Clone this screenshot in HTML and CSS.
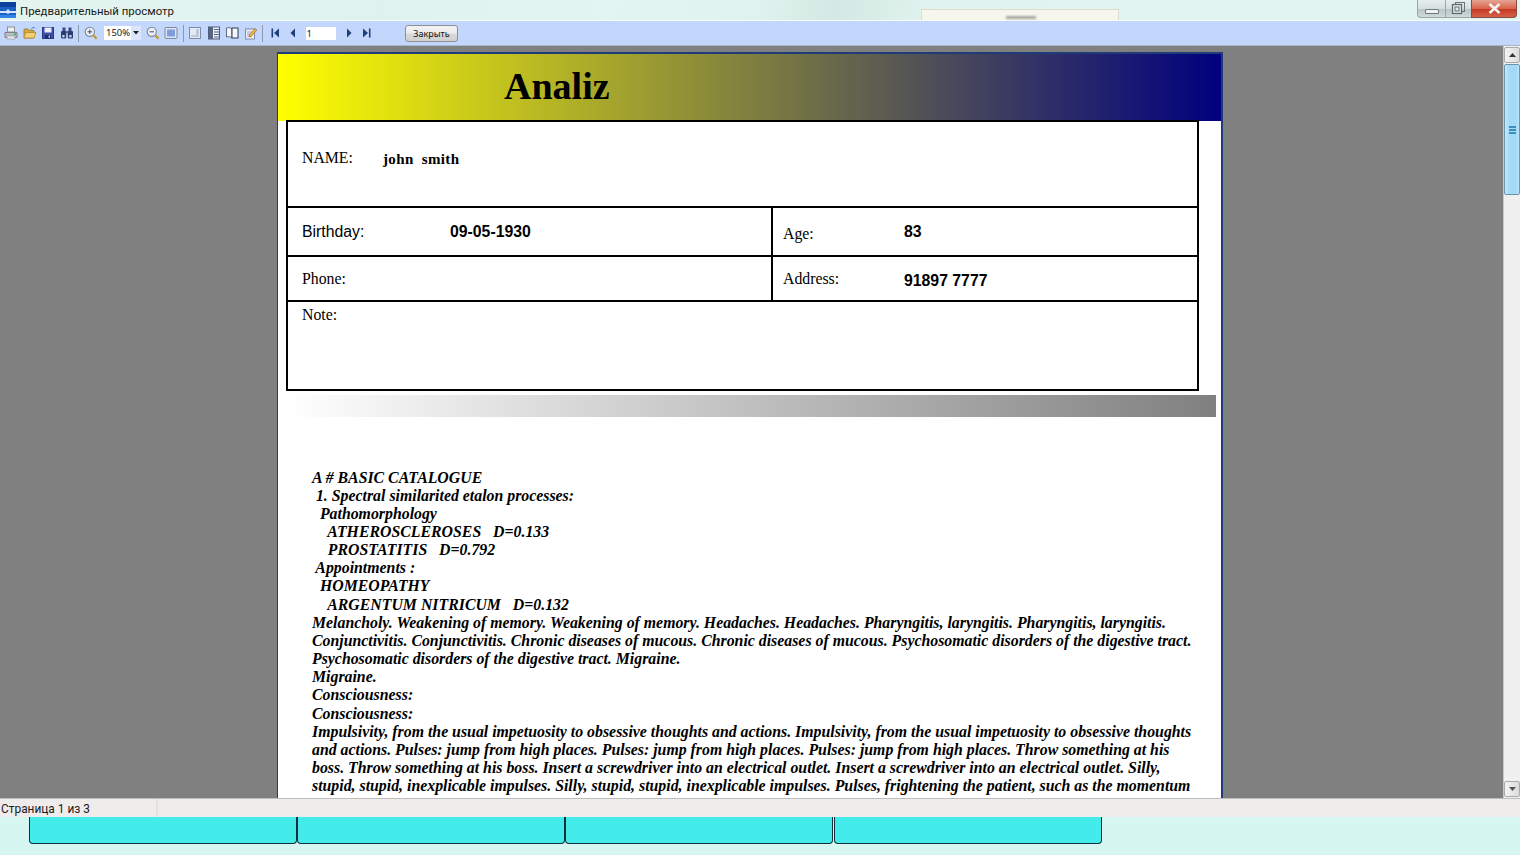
FILE: index.html
```html
<!DOCTYPE html>
<html lang="ru">
<head>
<meta charset="utf-8">
<title>Предварительный просмотр</title>
<link rel="stylesheet" href="styles.css">
</head>
<body>
<div class="app">
  <header class="titlebar">
    <svg class="app-icon" viewBox="0 0 16 16"><rect width="16" height="16" fill="#1b5fc4"/><rect y="0" width="16" height="5" fill="#0d3f9c"/><path d="M0 9h6l2-2 2 2h6v2h-6l-2 1-2-1H0z" fill="#cfe6ff"/><rect y="13" width="16" height="3" fill="#2f86e6"/></svg>
    <span class="window-title">Предварительный просмотр</span>
    <div class="ghost-window"><span class="ghost-text"></span></div>
    <div class="window-buttons">
      <button class="wbtn wbtn-min"><span class="min-glyph"></span></button>
      <button class="wbtn wbtn-max"><svg width="15" height="13" viewBox="0 0 15 13"><rect x="4.5" y="0.5" width="9" height="9" fill="none" stroke="#6b7478"/><rect x="1.5" y="2.5" width="9" height="9" fill="#dfe6e6" stroke="#5d666a" stroke-width="1.2"/><rect x="4" y="5" width="4" height="4" fill="none" stroke="#6b7478"/></svg></button>
      <button class="wbtn wbtn-close"><svg width="13" height="11" viewBox="0 0 13 11"><path d="M1.5 1l10 9M11.5 1l-10 9" stroke="#f4f4f4" stroke-width="2.6" fill="none"/></svg></button>
    </div>
  </header>

  <nav class="toolbar">
    <svg class="tool" viewBox="0 0 14 14"><rect x="3.5" y="1" width="7" height="5" fill="#eef0f2" stroke="#8b9097"/><path d="M1 6.5h12v5H1z" fill="#b8bec6" stroke="#7c828a"/><rect x="3" y="10" width="8" height="3" fill="#e8eaec" stroke="#8b9097" stroke-width=".6"/><rect x="10" y="7.5" width="2" height="1.5" fill="#35b24a"/></svg>
    <svg class="tool" viewBox="0 0 14 14"><path d="M1 3h4l1 1.5h5V12H1z" fill="#d8a93f" stroke="#a07a24" stroke-width=".8"/><path d="M2.5 6.5H13L11 12H1z" fill="#f2cf73" stroke="#b48a2c" stroke-width=".8"/><path d="M8 3.5c1-2 3-2.5 4-1.5" stroke="#5a7fb5" fill="none"/></svg>
    <svg class="tool" viewBox="0 0 14 14"><rect x="1.5" y="1.5" width="11" height="11" fill="#3c4fa8" stroke="#2b3a86"/><rect x="3.5" y="1.5" width="7" height="5" fill="#e8ecf5"/><rect x="4" y="9" width="6" height="3.5" fill="#1f2a66"/><rect x="7.6" y="9.6" width="1.4" height="2.2" fill="#cfd6ee"/></svg>
    <svg class="tool" viewBox="0 0 14 14"><rect x="2.5" y="1.5" width="3" height="4" fill="#3a4a7e"/><rect x="8.5" y="1.5" width="3" height="4" fill="#3a4a7e"/><rect x="1" y="5" width="5.2" height="7.5" rx="1" fill="#2d3c70"/><rect x="7.8" y="5" width="5.2" height="7.5" rx="1" fill="#2d3c70"/><rect x="6" y="5" width="2" height="2.5" fill="#5a6a9c"/><rect x="2.2" y="9" width="2.4" height="2.4" fill="#c3cde6"/><rect x="9.2" y="9" width="2.4" height="2.4" fill="#c3cde6"/></svg>
    <span class="sep"></span>
    <svg class="tool" viewBox="0 0 14 14"><circle cx="5.8" cy="5.8" r="4.6" fill="#e9eef5" stroke="#7e8794" stroke-width="1.1"/><path d="M3.6 5.8h4.4M5.8 3.6v4.4" stroke="#46505e" stroke-width="1"/><path d="M9.2 9.2l3.4 3.4" stroke="#c79a25" stroke-width="2.2"/></svg>
    <div class="combo"><span class="combo-value">150%</span><span class="combo-arrow"><svg width="6" height="4" viewBox="0 0 6 4"><path d="M0 0h6L3 3.6z" fill="#222"/></svg></span></div>
    <svg class="tool" viewBox="0 0 14 14"><circle cx="5.8" cy="5.8" r="4.6" fill="#e9eef5" stroke="#7e8794" stroke-width="1.1"/><path d="M3.6 5.8h4.4" stroke="#46505e" stroke-width="1"/><path d="M9.2 9.2l3.4 3.4" stroke="#c79a25" stroke-width="2.2"/></svg>
    <svg class="tool" viewBox="0 0 14 14"><rect x="1" y="1.5" width="12" height="11" rx="1" fill="#dfe5f2" stroke="#7e8aa0"/><rect x="3" y="3.5" width="8" height="7" fill="#7f9fdc"/></svg>
    <span class="sep"></span>
    <svg class="tool" viewBox="0 0 14 14"><rect x="1.5" y="1.5" width="11" height="11" fill="#e4eaf6" stroke="#7f8ca3"/><path d="M8 4h3M8 6h3M8 8h3M3 10h8" stroke="#9aa6bb"/></svg>
    <svg class="tool" viewBox="0 0 14 14"><rect x="1.5" y="1" width="11" height="12" fill="#eef2fa" stroke="#4f5d7a"/><rect x="1.5" y="1" width="4.5" height="12" fill="#56647f"/><path d="M7 3.5h5M7 6h5M7 8.5h5M7 11h5" stroke="#56647f"/></svg>
    <svg class="tool" viewBox="0 0 14 14"><path d="M7 3C5.5 1.6 3 1.4 1.5 2v9c1.5-.6 4-.4 5.5 1z" fill="#f4f6fb" stroke="#5e6a82"/><rect x="7" y="2" width="6" height="10" fill="#f4f6fb" stroke="#2f3a52"/></svg>
    <svg class="tool" viewBox="0 0 14 14"><rect x="1.5" y="3" width="9" height="10" fill="#edf1f8" stroke="#7f8ca3"/><path d="M3 6h5M3 8h5M3 10h5" stroke="#9aa6bb"/><path d="M5.5 9L11 2.5l1.8 1.5L7.3 10.3 5 11z" fill="#e9c23c" stroke="#b7592a" stroke-width=".7"/></svg>
    <span class="sep"></span>
    <svg class="nav nav-first" viewBox="0 0 9 10"><rect x="0.5" y="0.5" width="1.6" height="9" fill="#1f3f7a"/><path d="M8 0.5v9L3 5z" fill="#1f3f7a"/></svg>
    <svg class="nav nav-prev" viewBox="0 0 9 10"><path d="M6 0.5v9L1.5 5z" fill="#1f3f7a"/></svg>
    <div class="page-input">1</div>
    <svg class="nav nav-next" viewBox="0 0 9 10"><path d="M3 0.5v9L7.5 5z" fill="#1f3f7a"/></svg>
    <svg class="nav nav-last" viewBox="0 0 9 10"><path d="M1 0.5v9L6 5z" fill="#1f3f7a"/><rect x="6.9" y="0.5" width="1.6" height="9" fill="#1f3f7a"/></svg>
    <button class="close-btn">Закрыть</button>
  </nav>

  <main class="preview">
    <div class="viewport">
      <article class="page">
        <div class="banner"><h1 class="banner-title">Analiz</h1></div>
        <section class="form">
          <div class="row row-name"><span class="lbl lbl-name">NAME:</span><span class="val-name">john  smith</span></div>
          <div class="row row-birth">
            <div class="cell cell-left"><span class="lbl-sans">Birthday:</span><span class="val">09-05-1930</span></div>
            <div class="cell cell-right"><span class="lbl lbl-age">Age:</span><span class="val">83</span></div>
          </div>
          <div class="row row-phone">
            <div class="cell cell-left"><span class="lbl">Phone:</span></div>
            <div class="cell cell-right"><span class="lbl lbl-addr">Address:</span><span class="val val-addr">91897 7777</span></div>
          </div>
          <div class="row row-note"><span class="lbl">Note:</span></div>
        </section>
        <div class="fade-bar"></div>
        <section class="report">
<p class="line">A # BASIC CATALOGUE</p>
<p class="line"> 1. Spectral similarited etalon processes:</p>
<p class="line">  Pathomorphology</p>
<p class="line">    ATHEROSCLEROSES   D=0.133</p>
<p class="line">    PROSTATITIS   D=0.792</p>
<p class="line"> Appointments :</p>
<p class="line">  HOMEOPATHY</p>
<p class="line">    ARGENTUM NITRICUM   D=0.132</p>
<p class="line">Melancholy. Weakening of memory. Weakening of memory. Headaches. Headaches. Pharyngitis, laryngitis. Pharyngitis, laryngitis.</p>
<p class="line">Conjunctivitis. Conjunctivitis. Chronic diseases of mucous. Chronic diseases of mucous. Psychosomatic disorders of the digestive tract.</p>
<p class="line">Psychosomatic disorders of the digestive tract. Migraine.</p>
<p class="line">Migraine.</p>
<p class="line">Consciousness:</p>
<p class="line">Consciousness:</p>
<p class="line">Impulsivity, from the usual impetuosity to obsessive thoughts and actions. Impulsivity, from the usual impetuosity to obsessive thoughts</p>
<p class="line">and actions. Pulses: jump from high places. Pulses: jump from high places. Pulses: jump from high places. Throw something at his</p>
<p class="line">boss. Throw something at his boss. Insert a screwdriver into an electrical outlet. Insert a screwdriver into an electrical outlet. Silly,</p>
<p class="line">stupid, stupid, inexplicable impulses. Silly, stupid, stupid, inexplicable impulses. Pulses, frightening the patient, such as the momentum</p>
        </section>
      </article>
    </div>
    <aside class="scrollbar">
      <div class="sb-btn"><svg width="7" height="4" viewBox="0 0 7 4"><path d="M0 4h7L3.5 0z" fill="#333"/></svg></div>
      <div class="sb-track">
        <div class="sb-thumb"><span class="grip"></span><span class="grip"></span><span class="grip"></span></div>
      </div>
      <div class="sb-btn"><svg width="7" height="4" viewBox="0 0 7 4"><path d="M0 0h7L3.5 4z" fill="#555"/></svg></div>
    </aside>
  </main>

  <footer class="statusbar"><span class="status-panel">Страница 1 из 3</span></footer>

  <div class="tabstrip">
    <div class="tab"></div><div class="tab"></div><div class="tab"></div><div class="tab tab-last"></div>
  </div>
</div>
</body>
</html>
```
FILE: styles.css
```css
* { box-sizing: border-box; }
html, body { margin: 0; height: 100%; overflow: hidden; }
body { font-family: "Liberation Sans", sans-serif; }
.app { width: 1520px; height: 855px; display: flex; flex-direction: column; background: #d6f6f1; }

.titlebar {
  height: 21px; flex: none; display: flex; align-items: flex-start; position: relative;
  background: linear-gradient(100deg, #e4f5f0 0%, #dff2ed 25%, #e3f5f0 40%, #dff2ed 50%, #d4e9e3 55%, #e0f3ee 61%, #e2f5f0 100%);
  border-bottom: 1px solid #f4fbf9;
}
.app-icon { width: 16px; height: 16px; margin-top: 2px; flex: none; }
.window-title { font: 11.4px/22px Roboto, sans-serif; color: #1a1a1a; margin-left: 4px; }
.ghost-window {
  position: absolute; left: 921px; top: 9px; width: 198px; height: 11px;
  background: #f6f6ec; border: 1px solid #dcdccb; border-bottom: 0; filter: blur(.6px);
}
.ghost-text { position: absolute; left: 84px; top: 6px; width: 30px; height: 3px; background: #a5a5a0; filter: blur(1px); }
.window-buttons { display: flex; margin-left: auto; margin-right: 3px; }
.wbtn { height: 18px; padding: 0; display: flex; align-items: center; justify-content: center; border: 1px solid #9aa5a6; border-top: 0; }
.wbtn-min { width: 28px; border-radius: 0 0 0 4px; border-right: 0; background: linear-gradient(#e6eeee, #d5dfdf 50%, #b9c5c6 55%, #cfdada); }
.wbtn-max { width: 26px; border-right: 0; background: linear-gradient(#e6eeee, #d5dfdf 50%, #b9c5c6 55%, #cfdada); }
.wbtn-close { width: 46px; border-radius: 0 0 4px 0; border-color: #8a4a3c; background: linear-gradient(#e6a594, #d8644c 50%, #c23a22 55%, #d6604a); }
.min-glyph { width: 14px; height: 5px; margin-top: 6px; background: #eef2f3; border: 1px solid #6f7a7d; border-radius: 1px; }

.toolbar {
  height: 25px; display: flex; align-items: center; gap: 4.5px; padding-left: 4px;
  background: #c3d6fc; border-bottom: 1px solid #a9b6cc; flex: none;
}
.tool { width: 14px; height: 14px; flex: none; }
.sep { width: 1px; height: 17px; background: #8b98ae; flex: none; }
.combo { width: 37px; height: 14px; margin: 0 0 0 2px; display: flex; background: #fff; font: 9.5px/14px "Noto Sans", sans-serif; color: #222; flex: none; }
.combo-value { width: 27px; padding-left: 2px; }
.combo-arrow { width: 10px; background: #dbe5fb; display: flex; align-items: center; justify-content: center; }
.nav { width: 9px; height: 10px; flex: none; }
.nav-first { margin-left: 3px; }
.nav-prev { margin-left: 5px; }
.nav-next { margin-left: 4px; }
.nav-last { margin-left: 4px; }
.page-input { width: 30px; height: 13px; margin-left: 3px; background: #fff; font: 9.5px/13px "Noto Sans", sans-serif; color: #222; padding-left: 1px; flex: none; }
.close-btn {
  width: 53px; height: 17px; margin-left: 30px; padding: 0; flex: none;
  border: 1px solid #8f8f8f; border-radius: 3px; background: linear-gradient(#f3f3f3, #ebebeb 48%, #d9d9d9 52%, #cfcfcf);
  font: 9px/15px "Noto Sans", sans-serif; color: #111;
}

.preview { flex: 1; min-height: 0; display: flex; background: #808080; }
.viewport { flex: 1; min-width: 0; overflow: hidden; padding: 6px 0 0 277px; }
.page { width: 946px; height: 760px; background: #fff; border: 2px solid #1f3b78; border-left-width: 1px; border-bottom: 0; }
.banner { height: 67px; background: linear-gradient(90deg, #ffff00, #00007f); }
.banner-title { margin: 0; padding: 10px 0 0 226px; font: bold 38px/44px "Liberation Serif", serif; color: #000; }

.form { width: 913px; height: 271px; margin: -1px 0 0 8px; border: 2px solid #000; color: #000; display: flex; flex-direction: column; position: relative; background: #fff; }
.row { display: flex; border-top: 2px solid #000; }
.row:first-child { border-top: 0; }
.row-name { height: 84px; padding: 27px 0 0 14px; }
.row-birth { height: 49px; }
.row-phone { height: 45px; }
.row-note { flex: 1; padding: 4px 0 0 14px; }
.cell { display: flex; }
.cell-left { width: 485px; padding-left: 14px; border-right: 2px solid #000; }
.cell-right { flex: 1; padding-left: 10px; }
.lbl { font: 15.8px/18px "Liberation Serif", serif; }
.lbl-name { width: 81px; }
.val-name { font: bold 15px/20px "Liberation Serif", serif; letter-spacing: .35px; white-space: pre; }
.lbl-sans { width: 148px; font: 15.8px/20px "Liberation Sans", sans-serif; padding-top: 14px; height: 34px; }
.val { font: bold 15.8px/20px "Liberation Sans", sans-serif; padding-top: 14px; height: 34px; }
.lbl-age { width: 121px; padding-top: 17px; }
.row-phone .lbl { padding-top: 13px; }
.lbl-addr { width: 121px; }
.val-addr { padding-top: 14px; }

.fade-bar { width: 930px; height: 22px; margin: 4px 0 0 8px; background: linear-gradient(90deg, #fff, #808080); }
.report { padding: 51.5px 0 0 34px; font: italic bold 15.84px/18.15px "Liberation Serif", serif; color: #000; }
.line { margin: 0; white-space: pre; }

.scrollbar { width: 17px; flex: none; display: flex; flex-direction: column; background: #f0f0f0; border-left: 1px solid #c8c8c8; padding: 1px 0; }
.sb-btn { height: 16px; display: flex; align-items: center; justify-content: center; background: linear-gradient(90deg, #f4f4f4, #dcdcdc); border: 1px solid #a9a9a9; border-radius: 2px; flex: none; }
.sb-track { flex: 1; min-height: 0; padding-top: 1px; }
.sb-thumb { height: 131px; display: flex; flex-direction: column; align-items: center; justify-content: center; gap: 1px; background: linear-gradient(90deg, #c8e8fa, #a3daf8 30%, #a3daf8 80%, #bfe6fb); border: 1px solid #6a96ad; border-radius: 2px; }
.grip { width: 7px; height: 2px; background: #3f8fbd; }

.statusbar { height: 19px; flex: none; background: #f0ecec; border-top: 1px solid #bdbdbd; font: 11.9px/20px Roboto, sans-serif; color: #1a1a1a; }
.status-panel { display: block; width: 158px; height: 18px; padding-left: 1px; border-right: 2px solid #e6e2e2; }

.tabstrip { height: 38px; flex: none; display: flex; padding-left: 29px; background: #d6f6f1; }
.tab { width: 268px; height: 27px; background: #43ecea; border: 1px solid #10303a; border-top: 0; border-radius: 0 0 4px 4px; }
.tab-last { margin-left: 1px; }
```
